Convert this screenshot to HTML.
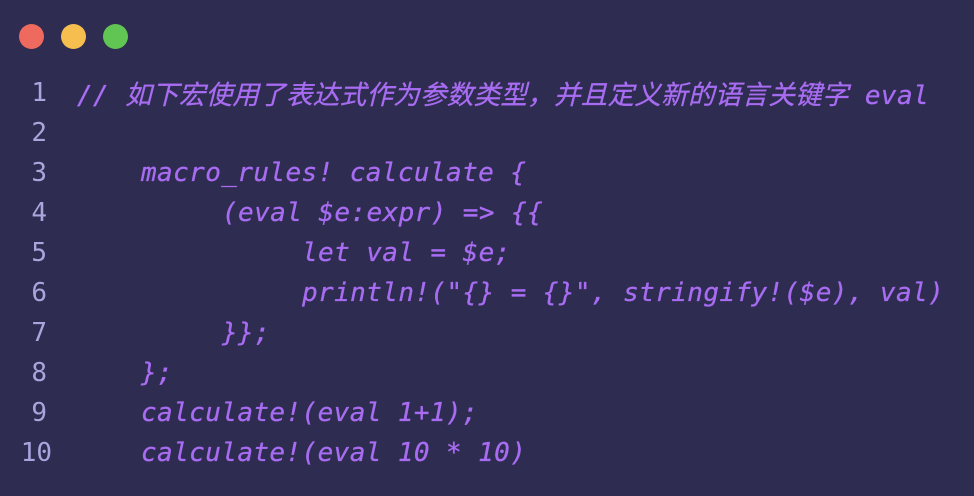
<!DOCTYPE html>
<html><head><meta charset="utf-8"><style>
html,body{margin:0;padding:0}
body{width:974px;height:496px;background:#2e2c50;overflow:hidden;position:relative;font-family:"DejaVu Sans Mono","Liberation Mono","Noto Sans CJK SC",monospace;font-size:26px}
.d{position:absolute;top:24px;width:25px;height:25px;border-radius:50%}
.n{position:absolute;left:0;width:47px;text-align:right;color:#aaa5dc;font-style:normal;line-height:40px}
.c{position:absolute;color:#a86cf2;font-style:italic;white-space:pre;line-height:40px;letter-spacing:0.4px;-webkit-text-stroke:0.3px #a86cf2}
</style></head><body>
<div class="d" style="left:19px;background:#ee6a5f"></div>
<div class="d" style="left:61px;background:#f5be4f"></div>
<div class="d" style="left:103px;background:#61c554"></div>
<div class="n" style="top:73px">1</div>
<div class="n" style="top:113px">2</div>
<div class="n" style="top:153px">3</div>
<div class="n" style="top:193px">4</div>
<div class="n" style="top:233px">5</div>
<div class="n" style="top:273px">6</div>
<div class="n" style="top:313px">7</div>
<div class="n" style="top:353px">8</div>
<div class="n" style="top:393px">9</div>
<div class="n" style="top:433px;width:52px">10</div>
<div class="c" style="top:73px;left:77px">// <span style="font-family:'Noto Sans CJK SC',sans-serif;font-size:26.5px;letter-spacing:0.3px">如下宏使用了表达式作为参数类型，并且定义新的语言关键字</span> eval</div>
<div class="c" style="top:153px;left:141px">macro_rules! calculate {</div>
<div class="c" style="top:193px;left:222px">(eval $e:expr) =&gt; {{</div>
<div class="c" style="top:233px;left:302px">let val = $e;</div>
<div class="c" style="top:273px;left:302px">println!("{} = {}", stringify!($e), val)</div>
<div class="c" style="top:313px;left:222px">}};</div>
<div class="c" style="top:353px;left:141px">};</div>
<div class="c" style="top:393px;left:141px">calculate!(eval 1+1);</div>
<div class="c" style="top:433px;left:141px">calculate!(eval 10 * 10)</div>
</body></html>
